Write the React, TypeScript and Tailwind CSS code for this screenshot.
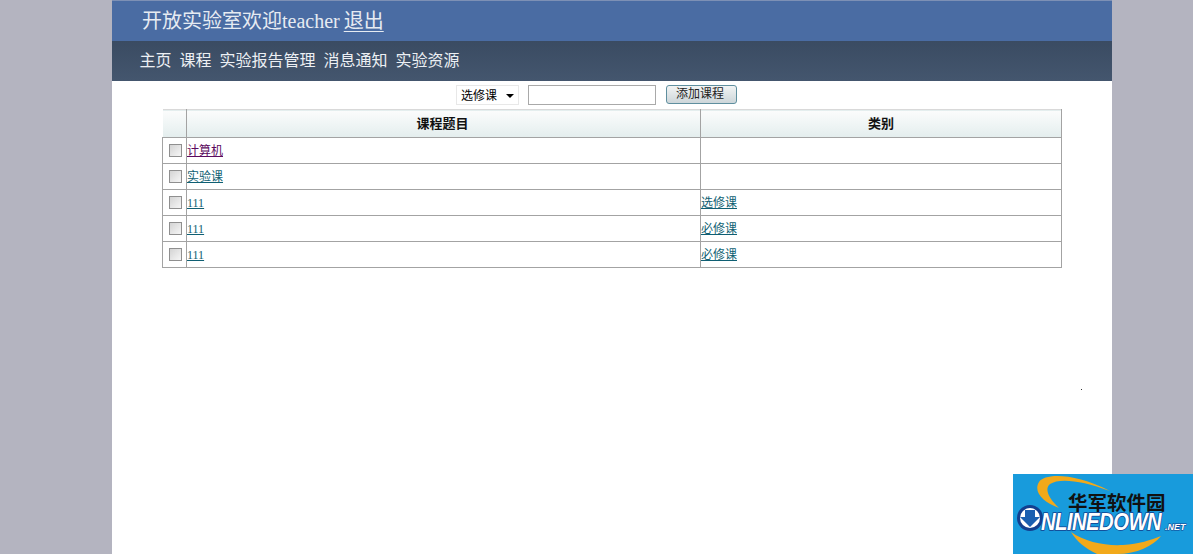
const FONT = "font-['Liberation_Serif','Noto_Sans_CJK_SC',serif]";

const rows = [
  { title: '计算机', type: '', visited: true },
  { title: '实验课', type: '' },
  { title: '111', type: '选修课' },
  { title: '111', type: '必修课' },
  { title: '111', type: '必修课' },
];

const navItems = ['主页', '课程', '实验报告管理', '消息通知', '实验资源'];

function Logo() {
  return (
    <div className="absolute right-0 bottom-0 w-[180px] h-[80px] bg-[#189bdc] overflow-hidden">
      {/* orange swoosh and the round download mark */}
      <svg className="absolute inset-0" width="180" height="80" viewBox="0 0 180 80">
        <path d="M46 34 C30 28 20 18 26 8 C32 -1 62 -1 97 17 C68 6 46 4 37 10 C31 15 36 25 46 34 Z" fill="#f2a91a" />
        <path d="M58 58 C72 68 92 72 110 71 C126 70 138 66 148 62 C140 72 124 80 104 80 L84 80 C72 74 64 68 58 58 Z" fill="#f2a91a" />
        <circle cx="17" cy="44" r="13" fill="#123f8f" />
        <circle cx="17" cy="44" r="10" fill="#ffffff" />
        <path d="M12 36 H22 V43 H27 L17 53 L7 43 H12 Z" fill="#1a5fb0" />
      </svg>
      <div className="absolute left-[55px] top-[18px] font-['Noto_Sans_CJK_SC',sans-serif] font-bold text-[19.5px] leading-[20px] text-[#111] whitespace-nowrap">
        华军软件园
      </div>
      <div className="absolute left-[28px] top-[40px] origin-left scale-x-[0.88] font-['Liberation_Sans',sans-serif] font-bold italic text-[23px] leading-[16px] tracking-[-0.6px] text-white whitespace-nowrap [-webkit-text-stroke:1.5px_#123f8f] [paint-order:stroke_fill]">
        NLINEDOWN
      </div>
      <div className="absolute left-[152px] top-[47px] font-['Liberation_Sans',sans-serif] font-bold italic text-[9px] leading-[12px] text-white whitespace-nowrap [-webkit-text-stroke:1px_#123f8f] [paint-order:stroke_fill]">
        .NET
      </div>
    </div>
  );
}

export default function App() {
  return (
    <div className={`relative h-[554px] overflow-hidden bg-[#b4b4c0] ${FONT}`}>
      <div className="relative ml-[112px] w-[1000px] h-full bg-white">
        {/* Header */}
        <div className="h-[41px] border-t border-[#7d90b5] bg-[#4a6ca3] pl-[30px] flex items-center text-[20px] text-[#e6ebf2]">
          <span>开放实验室欢迎teacher</span>
          <a href="#" className="ml-[4px] underline underline-offset-[3px] decoration-1">退出</a>
        </div>

        {/* Nav */}
        <div className="h-[40px] bg-gradient-to-b from-[#3a4b62] to-[#44566e] pl-[27.5px] flex items-center gap-[8px] text-[16px] text-[#eceff3]">
          {navItems.map((item) => (
            <span key={item}>{item}</span>
          ))}
        </div>

        {/* Add course form */}
        <div className="h-[28px] flex items-center pl-[344px]">
          <div className="w-[63px] h-[20px] border border-[#e8e8e8] flex items-center justify-between pl-[4px] pr-[3px] pt-[1px] text-[12px] text-black">
            <span>选修课</span>
            <span className="w-0 h-0 mr-[1px] border-x-[4px] border-x-transparent border-t-[4px] border-t-black" />
          </div>
          <input className="ml-[9px] w-[128px] h-[20px] border border-[#a9a9a9] bg-white" />
          <button className="ml-[10px] w-[71px] h-[19px] rounded-[3px] border border-[#5f8f9f] bg-gradient-to-b from-[#f2f4f4] to-[#cdd6da] text-[12px] leading-[13px] pb-[1px] pr-[3px] text-[#222] -mt-[1px]">
            添加课程
          </button>
        </div>

        {/* Course table */}
        <table className="ml-[50px] w-[900px] table-fixed border-collapse text-[12px]">
          <thead>
            <tr className="h-[28px] bg-gradient-to-b from-[#fbfcfc] to-[#e4eeee] border-t border-b border-[#d9d9d9] border-b-[#a3a3a3]">
              <th className="w-[24px] border-r border-[#a3a3a3]" />
              <th className="w-[514px] border-r border-[#a3a3a3] pr-[2px] font-bold text-[13px] text-[#111]">课程题目</th>
              <th className="border-r border-[#a3a3a3] font-bold text-[13px] text-[#111]">类别</th>
            </tr>
          </thead>
          <tbody>
            {rows.map((row, index) => (
              <tr key={index} className="h-[26px] border-b border-[#a3a3a3]">
                <td className="border-l border-r border-[#a3a3a3] text-center align-middle">
                  <span className="inline-block align-middle w-[13px] h-[13px] ml-[2px] mb-[2px] border border-[#8f8f8f] bg-gradient-to-br from-[#d4d4d4] to-[#f6f6f6]" />
                </td>
                <td className="border-r border-[#a3a3a3] pt-[1px]">
                  <a href="#" className={row.visited ? 'underline text-[#5b0a5e]' : 'underline text-[#0f5f73]'}>
                    {row.title}
                  </a>
                </td>
                <td className="border-r border-[#a3a3a3]">
                  {row.type && (
                    <a href="#" className="underline text-[#0f5f73]">
                      {row.type}
                    </a>
                  )}
                </td>
              </tr>
            ))}
          </tbody>
        </table>

        <span className="absolute left-[969px] top-[389px] w-[1px] h-[1px] bg-[#333]" />
      </div>
      <Logo />
    </div>
  );
}
